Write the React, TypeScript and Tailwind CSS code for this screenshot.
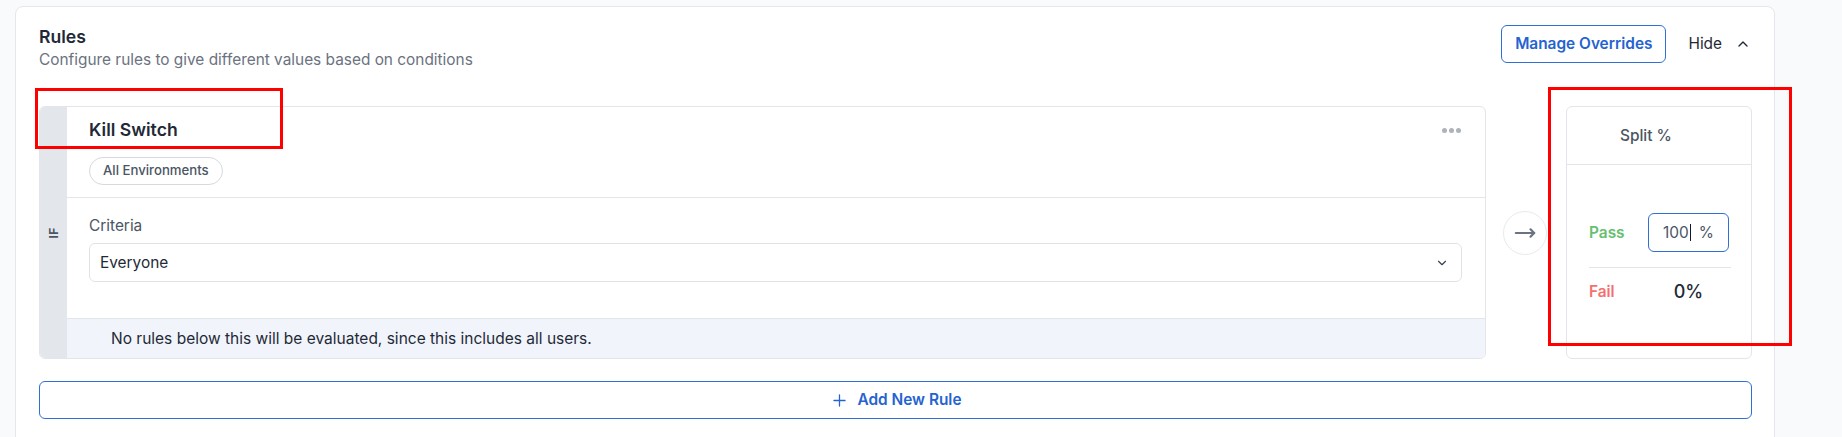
import { ChevronDown, ChevronUp, MoveRight, Plus } from "lucide-react";

function RuleCard() {
  return (
    <div className="flex flex-1 overflow-hidden rounded-md border border-[#e2e5ea] bg-white">
      {/* IF strip */}
      <div className="flex w-[27px] shrink-0 items-center justify-center bg-[#e3e6eb]">
        <span className="-rotate-90 text-[12px] font-bold tracking-wide text-[#4b5563]">IF</span>
      </div>

      <div className="flex flex-1 flex-col">
        <div className="border-b border-[#e2e5ea] pl-[22px] pr-[24px] pt-[10px] pb-[12px]">
          <div className="flex items-center justify-between">
            <h3 className="text-[17.6px] leading-[26px] font-semibold text-[#1f2937]">Kill Switch</h3>
            <div className="flex gap-[2px]">
              <span className="h-[5px] w-[5px] rounded-full bg-[#aeb2b9]" />
              <span className="h-[5px] w-[5px] rounded-full bg-[#aeb2b9]" />
              <span className="h-[5px] w-[5px] rounded-full bg-[#aeb2b9]" />
            </div>
          </div>
          <span className="mt-[14px] inline-flex h-[28px] items-center rounded-full border border-[#d6d9de] px-[13px] text-[13.2px] font-medium text-[#4b5563]">
            All Environments
          </span>
        </div>

        <div className="pl-[22px] pr-[23px] pt-[18px] pb-[36px]">
          <p className="text-[15.4px] leading-[20px] text-[#4b5563]">Criteria</p>
          <div className="mt-[7px] flex h-[39px] items-center justify-between rounded-md border border-[#dfe2e7] pl-[10px] pr-[12px]">
            <span className="text-[15.4px] text-[#1f2937]">Everyone</span>
            <ChevronDown size={14} strokeWidth={2} className="text-[#374151]" />
          </div>
        </div>

        <div className="flex h-[40px] items-center border-t border-[#e2e5ea] bg-[#f1f5fb] pl-[44px] text-[15.5px] text-[#1f2937]">
          No rules below this will be evaluated, since this includes all users.
        </div>
      </div>
    </div>
  );
}

function SplitCard() {
  return (
    <div className="flex w-[186px] shrink-0 flex-col rounded-md border border-[#e2e5ea] bg-white">
      <div className="flex h-[58px] items-center border-b border-[#e2e5ea] pl-[53px] text-[15.4px] font-medium text-[#4b5563]">
        Split %
      </div>
      <div className="pl-[22px] pr-[20px] pt-[48px]">
        <div className="flex items-center border-b border-[#e2e5ea] pb-[15px]">
          <span className="w-[59px] text-[15.4px] font-semibold text-[#66c070]">Pass</span>
          <div className="flex h-[39px] w-[81px] items-center rounded-md border border-[#2f6fd6] pl-[14px] text-[15.4px] text-[#4b5563]">
            <span>100</span>
            <span className="ml-[1px] h-[17px] w-px bg-[#111827]" />
            <span className="ml-[8px]">%</span>
          </div>
        </div>
        <div className="flex items-center pt-[12px]">
          <span className="w-[59px] text-[15.4px] font-semibold text-[#f47070]">Fail</span>
          <span className="w-[81px] text-center text-[18px] leading-[24px] font-medium text-[#1f2937]">0%</span>
        </div>
      </div>
    </div>
  );
}

export default function App() {
  return (
    <div className="relative h-[437px] w-full overflow-hidden bg-[#f9fafb] font-['Inter',sans-serif]">
      <div className="ml-[15px] mt-[6px] w-[1760px] rounded-lg border border-[#e5e7eb] bg-white pl-[23px] pr-[22px] pt-[17px] pb-[40px]">
        <div className="flex items-start justify-between">
          <div>
            <h2 className="text-[17.6px] leading-[26px] font-semibold text-[#1f2937]">Rules</h2>
            <p className="text-[15.4px] leading-[20px] text-[#6b7280]">
              Configure rules to give different values based on conditions
            </p>
          </div>
          <div className="mt-[1px] flex items-center">
            <button className="h-[38px] rounded-md border border-[#2f6fd6] px-[13px] text-[15.4px] font-semibold text-[#2563d0]">
              Manage Overrides
            </button>
            <button className="ml-[22px] mr-[1px] flex items-center gap-[13px] text-[15.4px] text-[#1f2937]">
              Hide
              <ChevronUp size={16} strokeWidth={2} />
            </button>
          </div>
        </div>

        <div className="mt-[36px] flex items-stretch">
          <RuleCard />
          <div className="ml-[17px] mr-[19px] flex h-[44px] w-[44px] shrink-0 items-center justify-center self-center rounded-full border border-[#e8eaee] bg-white">
            <MoveRight size={22} strokeWidth={2.4} className="text-[#6b7280]" />
          </div>
          <SplitCard />
        </div>

        <button className="mt-[22px] flex h-[38px] w-full items-center justify-center gap-[9px] rounded-md border border-[#2f6fd6] text-[15.4px] font-semibold text-[#2563d0]">
          <Plus size={19} strokeWidth={1.6} />
          Add New Rule
        </button>
      </div>

      {/* annotation boxes */}
      <div className="absolute left-[35px] top-[88px] h-[61px] w-[248px] border-[3px] border-[#ff0000]" />
      <div className="absolute left-[1548px] top-[87px] h-[259px] w-[244px] border-[3px] border-[#ff0000]" />
    </div>
  );
}
